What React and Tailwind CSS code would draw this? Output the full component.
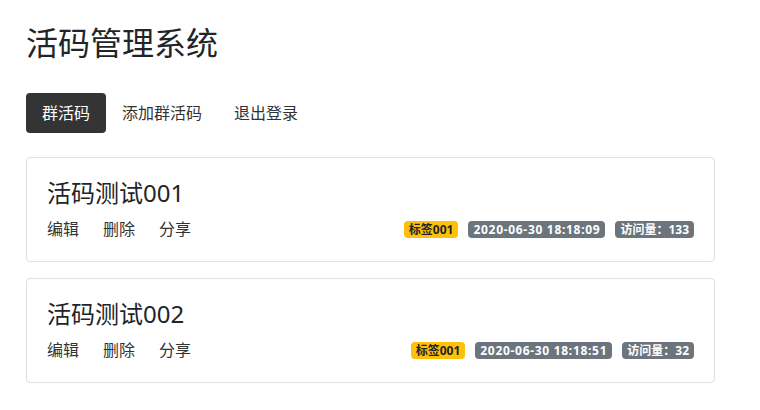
import { useState } from 'react';

const font = { fontFamily: '"Noto Sans", "Noto Sans CJK SC", sans-serif' };

function Badge({ color, wide, children }) {
  const cls =
    color === 'warning'
      ? 'bg-[#ffc107] text-[#212529]'
      : 'bg-[#6c757d] text-white';
  return (
    <span
      className={`inline-block rounded-[4px] px-[5px] py-[2px] text-[12px] font-bold leading-[13px] ${cls} ${
        wide ? 'tracking-[0.7px]' : ''
      }`}
    >
      {children}
    </span>
  );
}

function QrCard({ item }) {
  return (
    <div className="mb-4 rounded-[4px] border border-[#dfdfdf] bg-white px-5 pt-5 pb-5">
      <h4 className="mb-[10px] text-[24px] font-normal leading-[29px] text-[#212529]">{item.name}</h4>
      <div className="flex h-6 items-center justify-between">
        <div className="flex gap-6 text-[16px] leading-6 text-[#333]">
          <a href="#">编辑</a>
          <a href="#">删除</a>
          <a href="#">分享</a>
        </div>
        <div className="flex items-center gap-[10px]">
          <Badge color="warning">{item.tag}</Badge>
          <Badge wide>{item.time}</Badge>
          <Badge>访问量：{item.views}</Badge>
        </div>
      </div>
    </div>
  );
}

export default function App() {
  const [active, setActive] = useState(0);
  const tabs = ['群活码', '添加群活码', '退出登录'];
  const items = [
    { name: '活码测试001', tag: '标签001', time: '2020-06-30 18:18:09', views: 133 },
    { name: '活码测试002', tag: '标签001', time: '2020-06-30 18:18:51', views: 32 },
  ];

  return (
    <div className="min-h-[410px] bg-white text-[#212529]" style={font}>
      <div className="ml-[26px] w-[689px] pt-6">
        <h1 className="mb-[31px] text-[32px] font-normal leading-[38px]">活码管理系统</h1>

        {/* Nav pills */}
        <div className="mb-6 flex">
          {tabs.map((t, i) => (
            <button
              key={t}
              onClick={() => setActive(i)}
              className={`h-10 rounded-[4px] px-4 text-[16px] leading-6 ${
                active === i ? 'bg-[#343434] text-white' : 'text-[#333]'
              }`}
            >
              {t}
            </button>
          ))}
        </div>

        {items.map((item) => (
          <QrCard key={item.name} item={item} />
        ))}
      </div>
    </div>
  );
}
